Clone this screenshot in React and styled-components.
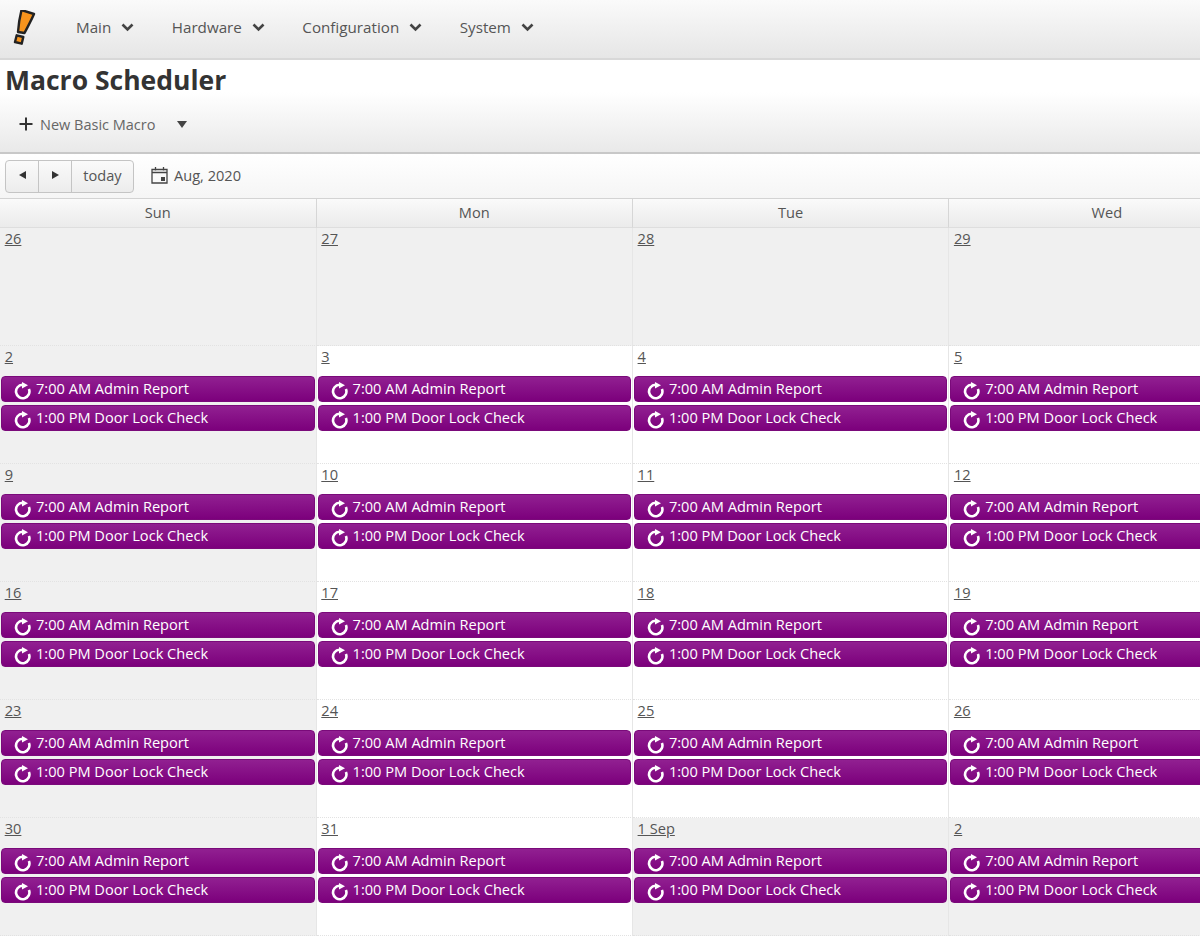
import styled, { createGlobalStyle } from "styled-components";

const GlobalStyle = createGlobalStyle`
  html, body {
    margin: 0;
    padding: 0;
    background: #fff;
    overflow: hidden;
  }
  body {
    font-family: "Open Sans", "Noto Sans", sans-serif;
    font-size: 14.6px;
    color: #555;
  }
`;

const Page = styled.div`
  width: 1200px;
  height: 940px;
  overflow: hidden;
`;

const NavBar = styled.div`
  display: flex;
  align-items: center;
  height: 58px;
  border-bottom: 2px solid #d8d8d8;
  background: linear-gradient(#fafafa, #e6e6e6);
`;

const Logo = styled.svg`
  width: 28px;
  height: 40px;
  margin-left: 10px;
  margin-top: 2px;
`;

const NavMenu = styled.div`
  display: flex;
  margin: 0 0 4px 38px;
  gap: 37.5px;
`;

const NavItem = styled.div`
  display: flex;
  align-items: center;
  gap: 10px;
  font-size: 15.2px;
  color: #555;
`;

const Header = styled.div`
  height: 92px;
  border-bottom: 2px solid #c8c8c8;
  background: linear-gradient(#fff 35%, #e9e9e9);
`;

const Title = styled.h1`
  margin: 0;
  padding: 2px 0 0 5px;
  font-size: 26.5px;
  line-height: 36px;
  font-weight: 700;
  color: #333;
`;

const ActionBar = styled.div`
  display: flex;
  align-items: center;
  height: 30px;
  margin-top: 11px;
  padding-left: 19px;
  font-size: 14.5px;
  color: #666;
`;

const ActionLabel = styled.span`
  margin-left: 7px;
`;

const Caret = styled.span`
  width: 0;
  height: 0;
  margin-left: 22px;
  border-left: 5px solid transparent;
  border-right: 5px solid transparent;
  border-top: 7px solid #444;
`;

const Toolbar = styled.div`
  display: flex;
  align-items: center;
  height: 44px;
  padding-left: 5px;
  background: linear-gradient(#fff, #f5f5f5);
  border-bottom: 1px solid #d3d3d3;
`;

const ButtonGroup = styled.div`
  display: flex;
  height: 33px;
  border: 1px solid #c4c4c4;
  border-radius: 4px;
  background: linear-gradient(#fafafa, #ececec);
  box-sizing: border-box;
`;

const ToolButton = styled.div`
  display: flex;
  align-items: center;
  justify-content: center;
  width: ${(props) => props.width}px;
  padding-bottom: ${(props) => (props.label ? 2 : 0)}px;
  border-left: ${(props) => (props.first ? "none" : "1px solid #c4c4c4")};
  font-size: 14.6px;
  color: #555;
`;

const Arrow = styled.span`
  width: 0;
  height: 0;
  margin-bottom: 2px;
  border-top: 4px solid transparent;
  border-bottom: 4px solid transparent;
  ${(props) =>
    props.left ? "border-right: 7px solid #333;" : "border-left: 7px solid #333;"}
`;

const DateLabel = styled.div`
  display: flex;
  align-items: center;
  gap: 6px;
  margin-left: 17px;
  padding-bottom: 2px;
  font-size: 14.6px;
  color: #555;
`;

const CalendarGrid = styled.div`
  display: grid;
  grid-template-columns: 316.6px 316.3px 316.3px 316.3px;
  width: 1266px;
`;

const DayHeader = styled.div`
  display: flex;
  align-items: center;
  justify-content: center;
  height: 29px;
  box-sizing: border-box;
  padding-bottom: 2px;
  font-size: 14.6px;
  color: #555;
  background: linear-gradient(#fafafa, #ebebeb);
  border-right: 1px solid #d6d6d6;
  border-bottom: 1px solid #dedede;
`;

const DayCell = styled.div`
  height: 118px;
  box-sizing: border-box;
  padding: 1px 1px 0;
  background: ${(props) => (props.muted ? "#f0f0f0" : "#fff")};
  border-right: 1px solid #e6e6e6;
  border-bottom: 1px dotted #e2e2e2;
`;

const DayNumber = styled.a`
  display: block;
  width: fit-content;
  margin: -1px 0 10px 3.7px;
  height: 20px;
  line-height: 20px;
  font-size: 14.6px;
  color: #555;
  text-decoration: underline;
`;

const Event = styled.div`
  display: flex;
  align-items: flex-start;
  height: 26px;
  box-sizing: border-box;
  margin-bottom: 3px;
  padding-left: 12px;
  gap: 4px;
  border-radius: 4px;
  border: 1px solid #7a0a7a;
  background: linear-gradient(#912091, #7c007c);
  color: #fff;
  font-size: 14.6px;
  line-height: 22px;
  white-space: nowrap;
`;

const EventIcon = styled.svg`
  flex: none;
  margin-top: 5px;
`;

const navItems = ["Main", "Hardware", "Configuration", "System"];
const dayNames = ["Sun", "Mon", "Tue", "Wed"];
const weeks = [
  [["26", true], ["27", true], ["28", true], ["29", true]],
  [["2", true], ["3"], ["4"], ["5"]],
  [["9", true], ["10"], ["11"], ["12"]],
  [["16", true], ["17"], ["18"], ["19"]],
  [["23", true], ["24"], ["25"], ["26"]],
  [["30", true], ["31"], ["1 Sep", true], ["2", true]],
];

function Chevron() {
  return (
    <svg width="13" height="9" viewBox="0 0 13 9">
      <path d="M1.5 1.5 L6.5 6.5 L11.5 1.5" fill="none" stroke="#444" strokeWidth="2.6" />
    </svg>
  );
}

function RedoIcon() {
  return (
    <EventIcon width="18" height="18" viewBox="0 0 18 18">
      <path
        d="M8.5 2.8 A6.7 6.7 0 1 0 14.9 6.9"
        fill="none"
        stroke="#fff"
        strokeWidth="2.6"
      />
      <path d="M8 0 L14 3.2 L8 6.5 Z" fill="#fff" />
    </EventIcon>
  );
}

function CalendarIcon() {
  return (
    <svg width="17" height="18" viewBox="0 0 17 18">
      <path
        d="M1 3.5 H16 V17 H1 Z M1 6.5 H16 M4.5 1 V4.5 M12.5 1 V4.5"
        fill="none"
        stroke="#444"
        strokeWidth="1.3"
      />
      <rect x="10" y="11" width="4" height="4" fill="#444" />
    </svg>
  );
}

function CalendarEvent({ children }) {
  return (
    <Event>
      <RedoIcon />
      <span>{children}</span>
    </Event>
  );
}

export default function App() {
  return (
    <Page>
      <GlobalStyle />
      <NavBar>
        <Logo viewBox="10 10 28 40">
          <path
            d="M21.5 10 L34 14 C31 21 27.5 27 24.5 33 L18 32 C18.5 24 20 16 21.5 10 Z M16.7 35.3 L23.3 37 L21.7 43.7 L15 42 Z"
            fill="#f7941d"
            stroke="#222"
            strokeWidth="2.4"
            strokeLinejoin="round"
          />
        </Logo>
        <NavMenu>
          {navItems.map((item) => (
            <NavItem key={item}>
              {item}
              <Chevron />
            </NavItem>
          ))}
        </NavMenu>
      </NavBar>
      <Header>
        <Title>Macro Scheduler</Title>
        <ActionBar>
          <svg width="14" height="14" viewBox="0 0 14 14">
            <path d="M7 0.5 V13.5 M0.5 7 H13.5" stroke="#333" strokeWidth="2" />
          </svg>
          <ActionLabel>New Basic Macro</ActionLabel>
          <Caret />
        </ActionBar>
      </Header>
      <Toolbar>
        <ButtonGroup>
          <ToolButton first width={32}>
            <Arrow left />
          </ToolButton>
          <ToolButton width={32}>
            <Arrow />
          </ToolButton>
          <ToolButton label="true" width={61}>
            today
          </ToolButton>
        </ButtonGroup>
        <DateLabel>
          <CalendarIcon />
          Aug, 2020
        </DateLabel>
      </Toolbar>
      <CalendarGrid>
        {dayNames.map((name) => (
          <DayHeader key={name}>{name}</DayHeader>
        ))}
        {weeks.map((week, w) =>
          week.map(([label, muted], d) => (
            <DayCell key={`${w}-${d}`} muted={muted}>
              <DayNumber>{label}</DayNumber>
              {w > 0 && (
                <>
                  <CalendarEvent>7:00 AM Admin Report</CalendarEvent>
                  <CalendarEvent>1:00 PM Door Lock Check</CalendarEvent>
                </>
              )}
            </DayCell>
          ))
        )}
      </CalendarGrid>
    </Page>
  );
}
